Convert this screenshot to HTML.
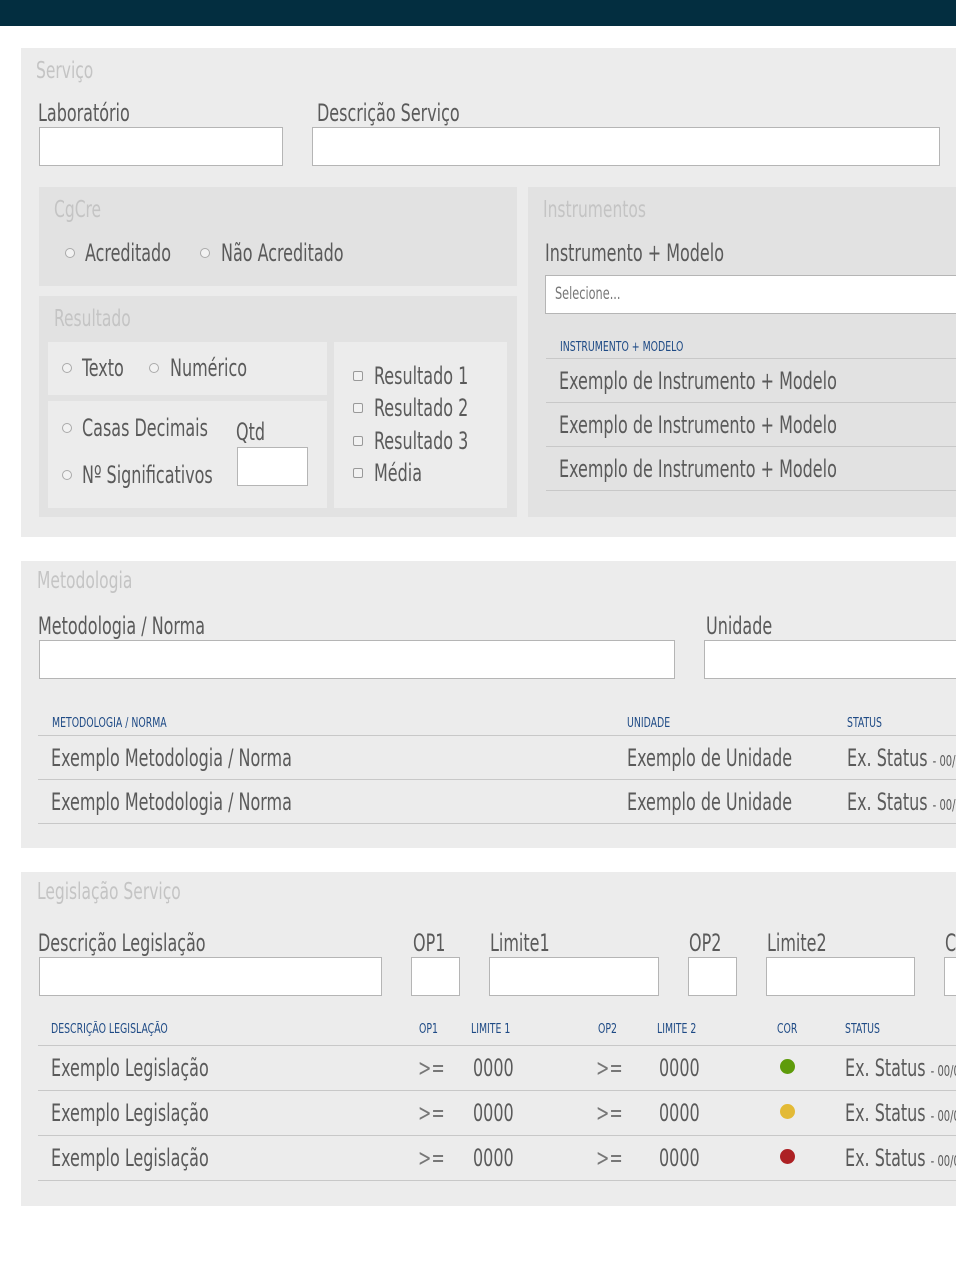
<!DOCTYPE html><html><head><meta charset="utf-8"><style>
*{box-sizing:border-box;margin:0;padding:0}
body{width:956px;height:1277px;background:#fff;position:relative;overflow:hidden;font-family:"Liberation Sans Narrow","DejaVu Sans Condensed","Liberation Sans",sans-serif;color:#555}
div,span{position:absolute;white-space:nowrap}
.sec{background:#ececec}
.box{background:#e2e2e2}
.in{background:#ececec}
.t{color:#c4c4c4;font-size:23px;transform:scaleX(.75);transform-origin:left top}
.l{font-size:24px;color:#5a5a5a;transform:scaleX(.74);transform-origin:left top}
.inp{background:#fff;border:1px solid #b5b5b5}
.h{font-size:13px;color:#1e4a85;transform:scaleX(.8);transform-origin:left top}
.line{height:1px;background:#c8c8c8}
.r{width:10px;height:10px;border:1px solid #aaa;border-radius:50%;background:#f2f2f2}
.c{width:10px;height:10px;border:1px solid #999;border-radius:2px;background:#f2f2f2}
.sm{font-size:15px}
.dot{width:15px;height:15px;border-radius:50%}
</style></head><body>
<div style="left:0;top:0;width:956px;height:26px;background:#032e40"></div>

<div class="sec" style="left:21px;top:48px;width:935px;height:489px"></div>
<div class="t" style="left:36px;top:58px">Serviço</div>
<div class="l" style="left:38px;top:99px">Laboratório</div>
<div class="l" style="left:317px;top:99px">Descrição Serviço</div>
<div class="inp" style="left:39px;top:127px;width:244px;height:39px"></div>
<div class="inp" style="left:312px;top:127px;width:628px;height:39px"></div>

<div class="box" style="left:39px;top:187px;width:478px;height:99px"></div>
<div class="t" style="left:54px;top:197px">CgCre</div>
<div class="r" style="left:65px;top:248px"></div><div class="l" style="left:85px;top:239px">Acreditado</div>
<div class="r" style="left:200px;top:248px"></div><div class="l" style="left:221px;top:239px">Não Acreditado</div>

<div class="box" style="left:39px;top:296px;width:478px;height:221px"></div>
<div class="t" style="left:54px;top:306px">Resultado</div>
<div class="in" style="left:48px;top:342px;width:279px;height:53px"></div>
<div class="in" style="left:48px;top:401px;width:279px;height:107px"></div>
<div class="in" style="left:334px;top:342px;width:173px;height:166px"></div>
<div class="r" style="left:62px;top:363px"></div><div class="l" style="left:82px;top:354px">Texto</div>
<div class="r" style="left:149px;top:363px"></div><div class="l" style="left:170px;top:354px">Numérico</div>
<div class="r" style="left:62px;top:423px"></div><div class="l" style="left:82px;top:414px">Casas Decimais</div>
<div class="r" style="left:62px;top:470px"></div><div class="l" style="left:82px;top:461px">Nº Significativos</div>
<div class="l" style="left:236px;top:418px">Qtd</div>
<div class="inp" style="left:237px;top:447px;width:71px;height:39px"></div>
<div class="c" style="left:353px;top:371px"></div><div class="l" style="left:374px;top:362px">Resultado 1</div>
<div class="c" style="left:353px;top:403px"></div><div class="l" style="left:374px;top:394px">Resultado 2</div>
<div class="c" style="left:353px;top:436px"></div><div class="l" style="left:374px;top:427px">Resultado 3</div>
<div class="c" style="left:353px;top:468px"></div><div class="l" style="left:374px;top:459px">Média</div>

<div class="box" style="left:528px;top:187px;width:428px;height:330px"></div>
<div class="t" style="left:543px;top:197px">Instrumentos</div>
<div class="l" style="left:545px;top:239px">Instrumento + Modelo</div>
<div class="inp" style="left:545px;top:275px;width:420px;height:39px"></div>
<div class="l" style="left:555px;top:284px;font-size:17px;color:#777">Selecione...</div>
<div class="h" style="left:560px;top:340px">INSTRUMENTO + MODELO</div>
<div class="line" style="left:546px;top:358px;width:410px"></div>
<div class="l" style="left:559px;top:367px">Exemplo de Instrumento + Modelo</div>
<div class="line" style="left:546px;top:402px;width:410px"></div>
<div class="l" style="left:559px;top:411px">Exemplo de Instrumento + Modelo</div>
<div class="line" style="left:546px;top:446px;width:410px"></div>
<div class="l" style="left:559px;top:455px">Exemplo de Instrumento + Modelo</div>
<div class="line" style="left:546px;top:490px;width:410px"></div>

<div class="sec" style="left:21px;top:561px;width:935px;height:287px"></div>
<div class="t" style="left:37px;top:568px">Metodologia</div>
<div class="l" style="left:38px;top:612px">Metodologia / Norma</div>
<div class="l" style="left:706px;top:612px">Unidade</div>
<div class="inp" style="left:39px;top:640px;width:636px;height:39px"></div>
<div class="inp" style="left:704px;top:640px;width:260px;height:39px"></div>
<div class="h" style="left:52px;top:716px">METODOLOGIA / NORMA</div>
<div class="h" style="left:627px;top:716px">UNIDADE</div>
<div class="h" style="left:847px;top:716px">STATUS</div>
<div class="line" style="left:38px;top:735px;width:918px"></div>
<div class="l" style="left:51px;top:744px">Exemplo Metodologia / Norma</div>
<div class="l" style="left:627px;top:744px">Exemplo de Unidade</div>
<div class="l" style="left:847px;top:744px">Ex. Status <span class="sm" style="position:static">- 00/00</span></div>
<div class="line" style="left:38px;top:779px;width:918px"></div>
<div class="l" style="left:51px;top:788px">Exemplo Metodologia / Norma</div>
<div class="l" style="left:627px;top:788px">Exemplo de Unidade</div>
<div class="l" style="left:847px;top:788px">Ex. Status <span class="sm" style="position:static">- 00/00</span></div>
<div class="line" style="left:38px;top:823px;width:918px"></div>

<div class="sec" style="left:21px;top:872px;width:935px;height:334px"></div>
<div class="t" style="left:37px;top:879px">Legislação Serviço</div>
<div class="l" style="left:38px;top:929px">Descrição Legislação</div>
<div class="l" style="left:413px;top:929px">OP1</div>
<div class="l" style="left:490px;top:929px">Limite1</div>
<div class="l" style="left:689px;top:929px">OP2</div>
<div class="l" style="left:767px;top:929px">Limite2</div>
<div class="l" style="left:945px;top:929px">C</div>
<div class="inp" style="left:39px;top:957px;width:343px;height:39px"></div>
<div class="inp" style="left:411px;top:957px;width:49px;height:39px"></div>
<div class="inp" style="left:489px;top:957px;width:170px;height:39px"></div>
<div class="inp" style="left:688px;top:957px;width:49px;height:39px"></div>
<div class="inp" style="left:766px;top:957px;width:149px;height:39px"></div>
<div class="inp" style="left:944px;top:957px;width:30px;height:39px"></div>
<div class="h" style="left:51px;top:1022px">DESCRIÇÃO LEGISLAÇÃO</div>
<div class="h" style="left:419px;top:1022px">OP1</div>
<div class="h" style="left:471px;top:1022px">LIMITE 1</div>
<div class="h" style="left:598px;top:1022px">OP2</div>
<div class="h" style="left:657px;top:1022px">LIMITE 2</div>
<div class="h" style="left:777px;top:1022px">COR</div>
<div class="h" style="left:845px;top:1022px">STATUS</div>
<div class="line" style="left:38px;top:1045px;width:918px"></div>
<div class="line" style="left:38px;top:1090px;width:918px"></div>
<div class="line" style="left:38px;top:1135px;width:918px"></div>
<div class="line" style="left:38px;top:1180px;width:918px"></div>

<div class="l" style="left:51px;top:1054px">Exemplo Legislação</div>
<div class="l" style="left:418px;top:1054px;color:#777">&gt;=</div>
<div class="l" style="left:473px;top:1054px">0000</div>
<div class="l" style="left:596px;top:1054px;color:#777">&gt;=</div>
<div class="l" style="left:659px;top:1054px">0000</div>
<div class="dot" style="left:780px;top:1059px;background:#5e9b0a"></div>
<div class="l" style="left:845px;top:1054px">Ex. Status <span class="sm" style="position:static">- 00/00</span></div>

<div class="l" style="left:51px;top:1099px">Exemplo Legislação</div>
<div class="l" style="left:418px;top:1099px;color:#777">&gt;=</div>
<div class="l" style="left:473px;top:1099px">0000</div>
<div class="l" style="left:596px;top:1099px;color:#777">&gt;=</div>
<div class="l" style="left:659px;top:1099px">0000</div>
<div class="dot" style="left:780px;top:1104px;background:#e3ba36"></div>
<div class="l" style="left:845px;top:1099px">Ex. Status <span class="sm" style="position:static">- 00/00</span></div>

<div class="l" style="left:51px;top:1144px">Exemplo Legislação</div>
<div class="l" style="left:418px;top:1144px;color:#777">&gt;=</div>
<div class="l" style="left:473px;top:1144px">0000</div>
<div class="l" style="left:596px;top:1144px;color:#777">&gt;=</div>
<div class="l" style="left:659px;top:1144px">0000</div>
<div class="dot" style="left:780px;top:1149px;background:#ad2124"></div>
<div class="l" style="left:845px;top:1144px">Ex. Status <span class="sm" style="position:static">- 00/00</span></div>
</body></html>
